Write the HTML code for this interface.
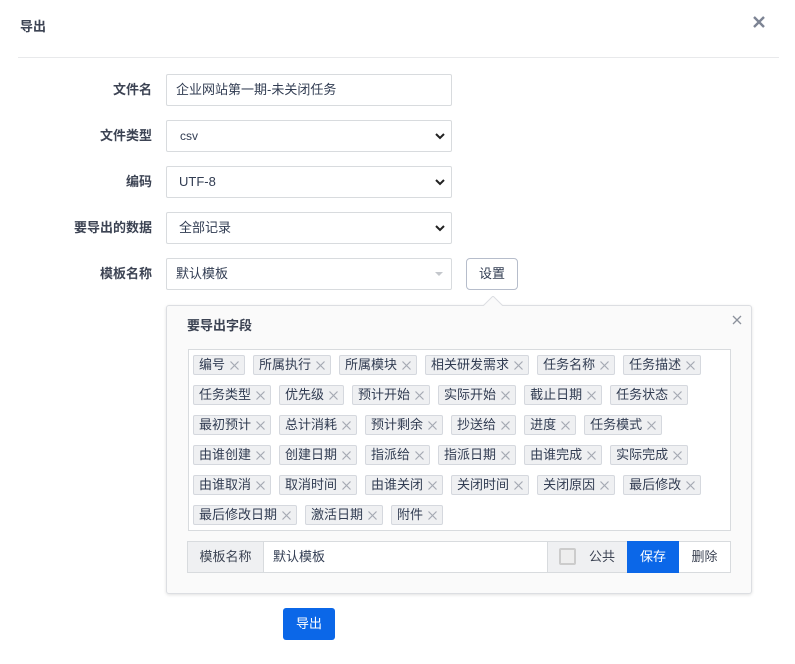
<!DOCTYPE html>
<html><head><meta charset="utf-8">
<style>
*{box-sizing:border-box;margin:0;padding:0}
body{width:795px;height:664px;background:#fff;font-family:"Liberation Sans","Noto Sans CJK SC",sans-serif;font-size:13px;color:#313c52;position:relative;overflow:hidden}
.a{position:absolute}
.lbl{position:absolute;right:643px;font-weight:bold;color:#3c4353;font-size:13px;line-height:32px;white-space:nowrap}
.inp{position:absolute;left:166px;width:286px;height:32px;border:1px solid #d8dbde;border-radius:2px;padding-left:9px;line-height:30px;font-size:13px;color:#313c52;background:#fff}
.chev{position:absolute;right:6px;top:11px}
.tags{position:absolute;left:188px;top:349px;width:543px;height:182px;border:1px solid #d8dbde;background:#fff;padding:5px 4px;display:flex;flex-wrap:wrap;align-content:flex-start;gap:10px 8px}
.tag{height:20px;border:1px solid #d5d8de;background:#eff0f2;border-radius:2px;padding:0 5px 0 5px;line-height:18px;font-size:13px;color:#313c52;white-space:nowrap;display:flex;align-items:center}
.tag svg{margin-left:5px;width:9px;height:9px}
</style></head><body>
<svg width="0" height="0" style="position:absolute"><defs><symbol id="x" viewBox="0 0 9 9"><path d="M0.5 0.5L8.5 8.5M8.5 0.5L0.5 8.5" stroke="#a5aab3" stroke-width="1.2"/></symbol></defs></svg>
<div class="a" style="left:20px;top:18px;font-weight:bold;font-size:13px;color:#3c4353;line-height:18px">导出</div>
<svg class="a" style="left:752px;top:15px" width="14" height="14" viewBox="0 0 14 14"><path d="M2 2L12 12M12 2L2 12" stroke="#7d8494" stroke-width="2.4"/></svg>
<div class="a" style="left:18px;top:57px;width:761px;height:1px;background:#e8e9eb"></div>

<div class="lbl" style="top:74px">文件名</div>
<div class="inp" style="top:74px">企业网站第一期-未关闭任务</div>
<div class="lbl" style="top:120px">文件类型</div>
<div class="inp" style="top:120px;padding-left:13px;font-size:12px">csv<svg class="chev" width="10" height="8" viewBox="0 0 10 8"><path d="M1 2L5 6L9 2" stroke="#222" stroke-width="2" fill="none"/></svg></div>
<div class="lbl" style="top:166px">编码</div>
<div class="inp" style="top:166px;padding-left:12px">UTF-8<svg class="chev" width="10" height="8" viewBox="0 0 10 8"><path d="M1 2L5 6L9 2" stroke="#222" stroke-width="2" fill="none"/></svg></div>
<div class="lbl" style="top:212px">要导出的数据</div>
<div class="inp" style="top:212px;padding-left:12px">全部记录<svg class="chev" width="10" height="8" viewBox="0 0 10 8"><path d="M1 2L5 6L9 2" stroke="#222" stroke-width="2" fill="none"/></svg></div>
<div class="lbl" style="top:258px">模板名称</div>
<div class="inp" style="top:258px">默认模板<svg class="a" style="right:8px;top:13px" width="8" height="5"><path d="M0 0H8L4 4Z" fill="#c4c7cc"/></svg></div>
<div class="a" style="left:466px;top:258px;width:52px;height:32px;border:1px solid #b6bdcb;border-radius:4px;text-align:center;line-height:30px;color:#313c52">设置</div>

<div class="a" style="left:166px;top:305px;width:586px;height:289px;background:#fafafa;border:1px solid #dcdee2;border-radius:3px;box-shadow:0 1px 3px rgba(0,0,0,.12)"></div>
<svg class="a" style="left:483px;top:296px" width="20" height="10"><path d="M0 10L10 0L20 10" fill="#fafafa" stroke="#dcdee2"/></svg>
<div class="a" style="left:187px;top:317px;font-weight:bold;color:#3c4353;line-height:18px">要导出字段</div>
<svg class="a" style="left:732px;top:315px" width="10" height="10"><path d="M1 1L9 9M9 1L1 9" stroke="#8c929c" stroke-width="1.3"/></svg>

<div class="tags">
<span class="tag">编号<svg><use href="#x"/></svg></span><span class="tag">所属执行<svg><use href="#x"/></svg></span><span class="tag">所属模块<svg><use href="#x"/></svg></span><span class="tag">相关研发需求<svg><use href="#x"/></svg></span><span class="tag">任务名称<svg><use href="#x"/></svg></span><span class="tag">任务描述<svg><use href="#x"/></svg></span>
<span class="tag">任务类型<svg><use href="#x"/></svg></span><span class="tag">优先级<svg><use href="#x"/></svg></span><span class="tag">预计开始<svg><use href="#x"/></svg></span><span class="tag">实际开始<svg><use href="#x"/></svg></span><span class="tag">截止日期<svg><use href="#x"/></svg></span><span class="tag">任务状态<svg><use href="#x"/></svg></span>
<span class="tag">最初预计<svg><use href="#x"/></svg></span><span class="tag">总计消耗<svg><use href="#x"/></svg></span><span class="tag">预计剩余<svg><use href="#x"/></svg></span><span class="tag">抄送给<svg><use href="#x"/></svg></span><span class="tag">进度<svg><use href="#x"/></svg></span><span class="tag">任务模式<svg><use href="#x"/></svg></span>
<span class="tag">由谁创建<svg><use href="#x"/></svg></span><span class="tag">创建日期<svg><use href="#x"/></svg></span><span class="tag">指派给<svg><use href="#x"/></svg></span><span class="tag">指派日期<svg><use href="#x"/></svg></span><span class="tag">由谁完成<svg><use href="#x"/></svg></span><span class="tag">实际完成<svg><use href="#x"/></svg></span>
<span class="tag">由谁取消<svg><use href="#x"/></svg></span><span class="tag">取消时间<svg><use href="#x"/></svg></span><span class="tag">由谁关闭<svg><use href="#x"/></svg></span><span class="tag">关闭时间<svg><use href="#x"/></svg></span><span class="tag">关闭原因<svg><use href="#x"/></svg></span><span class="tag">最后修改<svg><use href="#x"/></svg></span>
<span class="tag">最后修改日期<svg><use href="#x"/></svg></span><span class="tag">激活日期<svg><use href="#x"/></svg></span><span class="tag">附件<svg><use href="#x"/></svg></span>
</div>

<div class="a" style="left:187px;top:541px;width:544px;height:32px;border:1px solid #d8dbde;background:#fff"></div>
<div class="a" style="left:188px;top:542px;width:76px;height:30px;background:#eff0f2;border-right:1px solid #d8dbde;text-align:center;line-height:30px;color:#3c4353">模板名称</div>
<div class="a" style="left:273px;top:542px;line-height:30px;color:#313c52">默认模板</div>
<div class="a" style="left:547px;top:542px;width:80px;height:30px;background:#eff0f2;border-left:1px solid #d8dbde"></div>
<div class="a" style="left:559px;top:548px;width:17px;height:17px;border:2px solid #ccc;border-radius:2px;background:#eee"></div>
<div class="a" style="left:589px;top:542px;line-height:30px;color:#3c4353">公共</div>
<div class="a" style="left:627px;top:541px;width:52px;height:32px;background:#0b67e8;color:#fff;text-align:center;line-height:32px">保存</div>
<div class="a" style="left:679px;top:542px;width:51px;height:30px;text-align:center;line-height:30px;color:#3c4353">删除</div>

<div class="a" style="left:283px;top:608px;width:52px;height:32px;background:#0b67e8;border-radius:3px;color:#fff;text-align:center;line-height:32px">导出</div>
</body></html>
